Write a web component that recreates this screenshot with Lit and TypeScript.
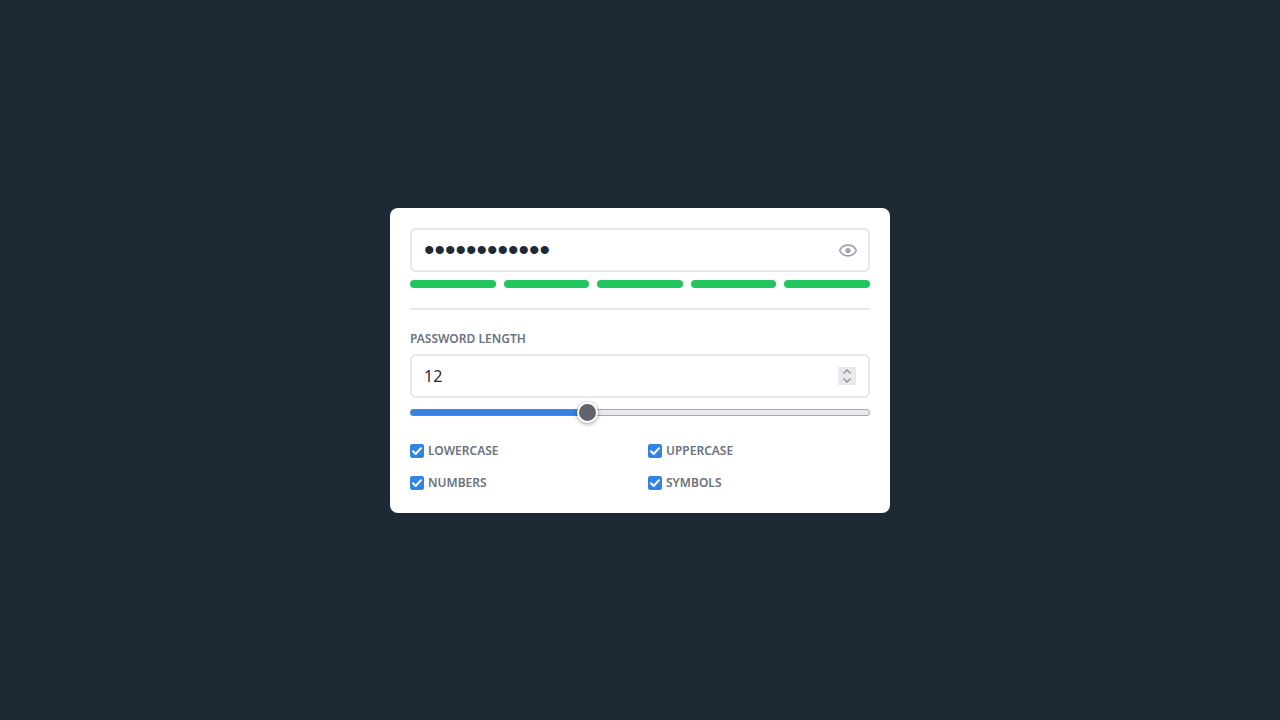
import { LitElement, html, css, svg } from "lit";
import { customElement, state } from "lit/decorators.js";

const MIN = 1;
const MAX = 30;

@customElement("app-root")
export class AppRoot extends LitElement {
  static styles = css`
    :host {
      display: flex;
      align-items: center;
      justify-content: center;
      min-height: 100vh;
      box-sizing: border-box;
      padding: 20px;
      background: #1e2936;
      color: #1f2937;
      font-family: "Noto Sans", sans-serif;
    }
    * {
      box-sizing: border-box;
    }
    .card {
      width: 100%;
      max-width: 500px;
      padding: 20px;
      border-radius: 8px;
      background: #fff;
    }
    .field {
      display: flex;
      align-items: center;
      height: 44px;
      padding: 0 10px 0 12px;
      border: 2px solid #e5e7eb;
      border-radius: 6px;
    }
    .input {
      flex: 1;
      min-width: 0;
      padding: 0;
      border: 0;
      outline: 0;
      background: none;
      color: inherit;
      font: 16px/24px "Noto Sans", sans-serif;
      appearance: textfield;
    }
    .input::-webkit-inner-spin-button {
      display: none;
    }
    .input[type="password"] {
      font: 30px/40px "Liberation Sans", sans-serif;
    }
    button {
      display: grid;
      place-items: center;
      padding: 0;
      border: 0;
      background: none;
      color: #9ca3af;
    }
    .eye {
      width: 20px;
      height: 20px;
    }
    .spin {
      display: grid;
      width: 18px;
      height: 18px;
      margin-right: 2px;
      background: #e9e9ed;
    }
    .spin button {
      height: 9px;
      color: #95959f;
    }
    .meter {
      display: grid;
      grid-template-columns: repeat(5, 1fr);
      gap: 8px;
      margin-top: 8px;
    }
    .bar {
      height: 8px;
      border-radius: 4px;
      background: #e5e7eb;
    }
    .on {
      background: #22c55e;
    }
    hr {
      height: 2px;
      margin: 20px 0;
      border: 0;
      background: #e5e7eb;
    }
    .label {
      display: block;
      margin-bottom: 6px;
      color: #6b7280;
      font-size: 12px;
      font-weight: 600;
      line-height: 18px;
      text-transform: uppercase;
    }
    .range {
      display: block;
      width: 100%;
      height: 21px;
      margin: 4px 0 18px;
      background: none;
      appearance: none;
    }
    .range::-webkit-slider-runnable-track {
      height: 7px;
      border-radius: 4px;
      background: linear-gradient(90deg, #3584e4 var(--fill), transparent var(--fill)), #e9e9ed;
      box-shadow: inset 0 0 0 1px #8080889e;
    }
    .range::-webkit-slider-thumb {
      width: 21px;
      height: 21px;
      margin-top: -7px;
      border: 2px solid #fff;
      border-radius: 50%;
      background: #62626d;
      box-shadow: 0 1px 4px #00000066;
      appearance: none;
    }
    .options {
      display: grid;
      grid-template-columns: 1fr 1fr;
      gap: 12px 16px;
    }
    .option {
      display: flex;
      align-items: center;
      gap: 4px;
      color: #6b7280;
      font-size: 12px;
      font-weight: 600;
      line-height: 20px;
      text-transform: uppercase;
    }
    .tick {
      display: grid;
    }
    .tick > * {
      grid-area: 1 / 1;
    }
    .tick svg {
      pointer-events: none;
    }
    .box {
      width: 14px;
      height: 14px;
      margin: 0;
      border: 1px solid #8f8f9d;
      border-radius: 2px;
      appearance: none;
    }
    .box:checked {
      border-color: #3584e4;
      background: #3584e4;
    }
  `;

  @state() private length = 12;
  @state() private visible = false;
  @state() private options: Record<string, boolean> = {
    lowercase: true,
    uppercase: true,
    numbers: true,
    symbols: true,
  };

  private get password() {
    return "aT7#kQ2!mZ9&xW4$pL6*vR3@nB8%hJ".slice(0, this.length);
  }

  private setLength(value: number) {
    this.length = Math.min(MAX, Math.max(MIN, value || MIN));
  }

  private chevron(path: string) {
    return html`<svg width="10" height="7" viewBox="0 0 10 7" fill="none" stroke="currentColor" stroke-width="1.5">
      ${svg`<path d=${path} />`}
    </svg>`;
  }

  render() {
    const fill = ((this.length - MIN) / (MAX - MIN)) * 100;
    return html`
      <main class="card">
        <div class="field">
          <input class="input" aria-label="Password" readonly
            type=${this.visible ? "text" : "password"} .value=${this.password} />
          <button class="eye" aria-label="Show password" @click=${() => (this.visible = !this.visible)}>
            <svg width="20" height="20" viewBox="0 0 20 20" fill="none">
              <path d="M1.700 10.500C3.200 6.800 6.300 5.200 10 5.200s6.800 1.600 8.300 5.300c-1.500 3.700-4.600 5.300-8.300 5.300s-6.800-1.600-8.300-5.300z" stroke="currentColor" stroke-width="1.700" />
              <circle cx="10" cy="10.500" r="2.600" fill="currentColor" />
            </svg>
          </button>
        </div>
        <div class="meter">
          ${[0, 1, 2, 3, 4].map((i) => html`<div class="bar ${this.length > i * 2 ? "on" : ""}"></div>`)}
        </div>
        <hr />
        <label class="label" for="length">Password length</label>
        <div class="field">
          <input class="input" id="length" type="number" min=${MIN} max=${MAX} .value=${String(this.length)}
            @change=${(e: Event) => this.setLength(Number((e.target as HTMLInputElement).value))} />
          <div class="spin">
            <button aria-label="Increase" @click=${() => this.setLength(this.length + 1)}>${this.chevron("M1.500 5.500 5 2l3.500 3.500")}</button>
            <button aria-label="Decrease" @click=${() => this.setLength(this.length - 1)}>${this.chevron("M1.500 1.500 5 5l3.500-3.500")}</button>
          </div>
        </div>
        <input class="range" type="range" aria-label="Password length" min=${MIN} max=${MAX}
          .value=${String(this.length)} style="--fill: ${fill}%"
          @input=${(e: Event) => this.setLength(Number((e.target as HTMLInputElement).value))} />
        <div class="options">
          ${Object.keys(this.options).map(
            (name) => html`<label class="option">
              <span class="tick">
                <input class="box" type="checkbox" .checked=${this.options[name]}
                  @change=${() => (this.options = { ...this.options, [name]: !this.options[name] })} />
                <svg width="14" height="14" viewBox="0 0 14 14" fill="none">
                  <path d="M3 7.300 5.700 10 11 4.200" stroke="#fff" stroke-width="2" stroke-linecap="round" stroke-linejoin="round" />
                </svg>
              </span>
              ${name}
            </label>`
          )}
        </div>
      </main>
    `;
  }
}
